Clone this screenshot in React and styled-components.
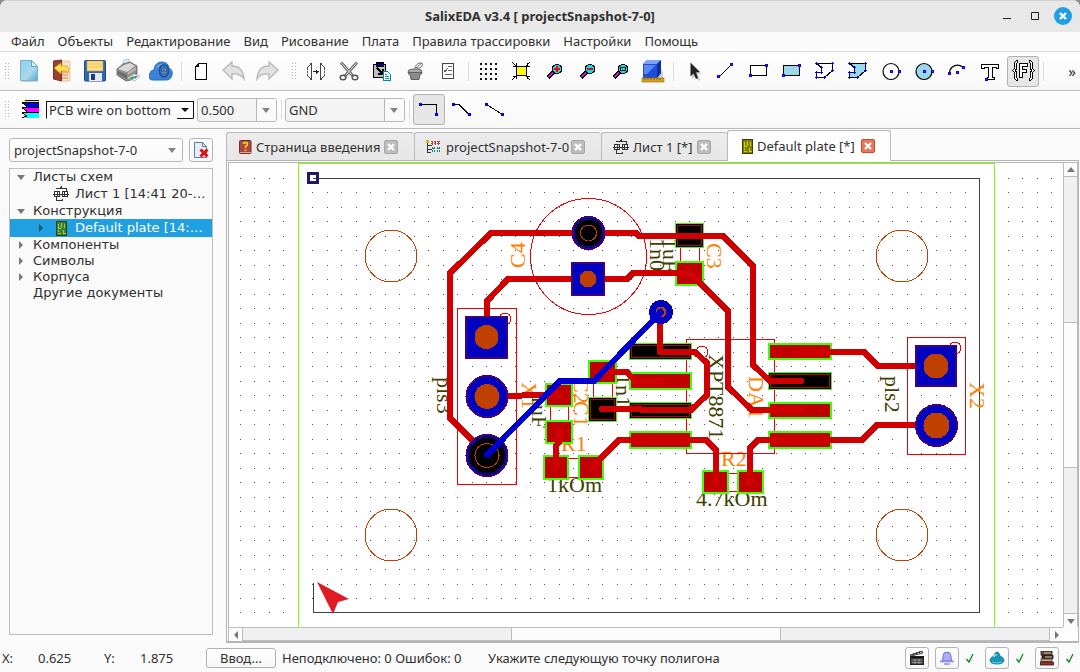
import React from 'react';
import styled, { createGlobalStyle, css } from 'styled-components';

const GlobalStyle = createGlobalStyle`
  *, *::before, *::after { box-sizing: border-box; }
  html, body, #root { height: 100%; }
  body {
    margin: 0;
    background: #8f8f8f;
    color: #303030;
    font-family: "Noto Sans", "Liberation Sans", sans-serif;
    font-size: 13px;
    line-height: 18px;
    overflow: hidden;
  }
  button, select, input { font: inherit; color: inherit; }
`;

/* ---------- window frame ---------- */

const Window = styled.div`
  height: 100%;
  display: flex;
  flex-direction: column;
  background: #fafafa;
  border-radius: 8px 8px 0 0;
  overflow: hidden;
`;

const TitleBar = styled.header`
  display: grid;
  grid-template-columns: 1fr auto 1fr;
  align-items: center;
  height: 32px;
  flex: none;
  background: #e8e8e8;
  box-shadow: inset 0 1px #d2d2d2;
`;

const Title = styled.h1`
  grid-column: 2;
  margin: 0;
  font-size: 13px;
  font-weight: 700;
  line-height: 18px;
`;

const WindowButtons = styled.div`
  display: flex;
  justify-content: flex-end;
  gap: 10px;
  padding-right: 8px;
`;

const WindowButton = styled.button`
  width: 18px;
  height: 18px;
  padding: 0;
  border: 0;
  border-radius: 50%;
  background: ${(p) => (p.$close ? '#20a0e0' : 'transparent')};
  svg { display: block; }
`;

const MenuBar = styled.nav`
  display: flex;
  align-items: flex-start;
  gap: 13px;
  height: 20px;
  flex: none;
  padding: 0 11px;
  background: #fbfbfb;
  border-bottom: 1px solid #dcdcdc;
`;

const MenuItem = styled.button`
  padding: 0;
  border: 0;
  background: none;
  line-height: 18px;
  white-space: nowrap;
`;

/* ---------- toolbars ---------- */

const ToolRow = styled.div`
  display: flex;
  align-items: center;
  gap: 4px;
  height: ${(p) => (p.$short ? 38 : 39)}px;
  flex: none;
  background: linear-gradient(#fefefe, #f8f8f8);
  border-bottom: 1px solid #b9b9b9;
`;

const ToolGroup = styled.div`
  display: flex;
  align-items: center;
  gap: 1px;
`;

const Handle = styled.span`
  width: 12px;
  height: 17px;
  flex: none;
  background: linear-gradient(90deg, #b4b4b4 1px, transparent 1px) 5px 0 / 3px 17px;
  background-clip: content-box;
  mask: repeating-linear-gradient(#000 0 1px, transparent 1px 3px);
  padding: 0 2px 0 5px;
`;

const Separator = styled.span`
  width: 6px;
  height: 19px;
  flex: none;
  background: linear-gradient(#dcdcdc, #dcdcdc) center / 1px 100% no-repeat;
`;

const ToolButton = styled.button`
  display: grid;
  place-items: center;
  width: 32px;
  height: 31px;
  flex: none;
  padding: 0;
  border: 1px solid transparent;
  border-radius: 3px;
  background: none;
  ${(p) => p.$pressed && css`
    background: #e6e6e6;
    border-color: #b2b2b2;
  `}
`;

const MoreButton = styled.button`
  margin-left: auto;
  padding: 0 4px;
  border: 0;
  background: none;
  font-size: 15px;
`;

const SelectBox = styled.div`
  position: relative;
  display: flex;
  width: ${(p) => p.$w};
  height: 24px;
  flex: none;
  border: 1px solid #b8b8b8;
  border-radius: 3px;
  background: ${(p) => (p.$white ? 'linear-gradient(#fff, #f8f8f8)' : '#f4f4f4')};
  ${(p) => p.$grow && css`flex: 1; min-width: 0;`}
  select {
    width: 100%;
    padding: 0 22px 0 ${(p) => (p.$white ? 4 : 3)}px;
    border: 0;
    background: none;
    appearance: none;
    outline: none;
  }
  &::after {
    content: "";
    position: absolute;
    right: 6px;
    top: 9px;
    border: 4px solid transparent;
    border-top: 5px solid #828282;
    border-bottom: 0;
  }
  ${(p) => !p.$white && css`
    &::before {
      content: "";
      position: absolute;
      right: 0;
      top: 0;
      bottom: 0;
      width: 20px;
      border-left: 1px solid #b8b8b8;
      background: #fafafa;
      border-radius: 0 2px 2px 0;
    }
  `}
`;

const LayerSelect = styled.div`
  position: relative;
  width: 148px;
  height: 18px;
  flex: none;
  margin-right: 2px;
  border: 1px solid #111;
  border-bottom-color: transparent;
  background: #fcfcfc;
  select {
    display: block;
    width: 100%;
    height: 16px;
    padding: 0 16px 0 2px;
    border: 0;
    line-height: 16px;
    background: none;
    appearance: none;
    outline: none;
  }
  &::before {
    content: "";
    position: absolute;
    right: 0;
    top: 0;
    width: 16px;
    height: 17px;
    border-bottom: 1px solid #111;
    background: #fcfcfc;
  }
  &::after {
    content: "";
    position: absolute;
    right: 4px;
    top: 6px;
    border: 4px solid transparent;
    border-top: 4px solid #111;
    border-bottom: 0;
  }
`;

/* ---------- body ---------- */

const Body = styled.main`
  display: flex;
  flex: 1;
  min-height: 0;
`;

const Sidebar = styled.aside`
  display: flex;
  flex-direction: column;
  gap: 6px;
  width: 226px;
  flex: none;
  padding: 9px 13px 9px 9px;
`;

const ProjectRow = styled.div`
  display: flex;
  gap: 6px;
`;

const SquareButton = styled.button`
  display: grid;
  place-items: center;
  width: 24px;
  height: ${(p) => p.$h || 24}px;
  flex: none;
  padding: 0;
  border: 1px solid #b4b4b4;
  border-radius: 3px;
  background: linear-gradient(#fff, #f6f6f6);
`;

const Tree = styled.ul`
  flex: 1;
  margin: 0;
  padding: 0;
  list-style: none;
  border: 1px solid #bdbdbd;
  background: #fafafa;
  font-family: "DejaVu Sans", sans-serif;
  font-size: 13px;
`;

const TreeRow = styled.li`
  display: flex;
  align-items: center;
  height: ${(p) => (p.$child ? 18 : 16)}px;
  padding-left: ${(p) => (p.$child ? 27 : 7)}px;
  line-height: 16px;
  white-space: nowrap;
  ${(p) => p.$selected && css`
    background: #20a0e0;
    color: #fff;
  `}
`;

const Twisty = styled.span`
  display: flex;
  width: 16px;
  flex: none;
`;

const TreeIcon = styled.span`
  display: flex;
  justify-content: center;
  width: 16px;
  margin-right: 6px;
  flex: none;
`;

const Workspace = styled.section`
  display: flex;
  flex-direction: column;
  flex: 1;
  min-width: 0;
  padding: 1px 0;
`;

const Tabs = styled.div`
  display: flex;
  align-items: flex-end;
  height: 30px;
  flex: none;
  position: relative;
  z-index: 1;
`;

const Tab = styled.div`
  display: flex;
  align-items: center;
  width: ${(p) => p.$w}px;
  height: ${(p) => (p.$active ? 31 : 28)}px;
  padding: 0 ${(p) => p.$pr}px 0 ${(p) => p.$pl}px;
  border: 1px solid #b9b9b9;
  border-right-width: ${(p) => (p.$active ? 1 : 0)}px;
  border-bottom: 0;
  border-radius: 3px 3px 0 0;
  background: ${(p) => (p.$active ? '#fdfdfd' : 'linear-gradient(#ececec, #e6e6e6)')};
  margin-bottom: ${(p) => (p.$active ? -1 : 0)}px;
`;

const TabName = styled.button`
  display: flex;
  align-items: center;
  gap: 4px;
  padding: 0;
  border: 0;
  background: none;
  white-space: nowrap;
  svg { flex: none; }
`;

const TabClose = styled.button`
  display: grid;
  place-items: center;
  width: 14px;
  height: 14px;
  margin-left: auto;
  flex: none;
  padding: 0;
  border: 1px solid ${(p) => (p.$active ? '#d04a2c' : '#a6a6a6')};
  border-radius: 2px;
  background: ${(p) => (p.$active ? '#e8785a' : '#bcbcbc')};
`;

const Frame = styled.div`
  display: grid;
  grid-template-columns: 1fr 15px;
  grid-template-rows: 1fr 14px;
  flex: 1;
  min-height: 0;
  margin-right: 1px;
  border: 1px solid #b5b5b5;
  border-bottom-width: 2px;
  padding: 1px 0 0 1px;
  background: #fdfdfd;
`;

const Board = styled.svg`
  display: block;
  width: 100%;
  height: 100%;
  min-height: 0;
  background: #fff;
  border-left: 1px solid #b5b5b5;
  border-top: 1px solid #b5b5b5;
`;

const ScrollBar = styled.div`
  display: flex;
  flex-direction: ${(p) => (p.$vertical ? 'column' : 'row')};
  border: 1px solid #bcbcbc;
  border-${(p) => (p.$vertical ? 'bottom' : 'right')}: 0;
  background: #f0f0f0;
`;

const ScrollArrow = styled.button`
  display: grid;
  place-items: center;
  width: 13px;
  height: 13px;
  flex: none;
  padding: 0;
  border: 0;
  background: #fcfcfc;
`;

const Groove = styled.span`
  flex: 1;
  border: 0 solid #bcbcbc;
  border-width: ${(p) => {
    if (p.$thumb) return 0;
    return p.$vertical ? '1px 0' : '0 1px';
  }};
  background: ${(p) => (p.$thumb ? '#fcfcfc' : '#f0f0f0')};
`;

/* ---------- status bar ---------- */

const StatusBar = styled.footer`
  display: flex;
  align-items: center;
  height: 28px;
  flex: none;
  padding-left: 2px;
  white-space: nowrap;
`;

const StatusText = styled.span`
  width: ${(p) => (p.$w ? `${p.$w}px` : 'auto')};
  flex: none;
`;

const InputButton = styled.button`
  width: 70px;
  height: 20px;
  margin-right: 6px;
  padding: 0;
  border: 1px solid #b0b0b0;
  border-radius: 3px;
  background: linear-gradient(#fff, #f6f6f6);
  line-height: 18px;
`;

const StatusIcons = styled.div`
  display: flex;
  align-items: center;
  margin-left: auto;
  ${SquareButton} + ${SquareButton} { margin-left: 6px; }
`;

const Check = styled.span`
  display: flex;
  justify-content: center;
  width: 14px;
  margin: 0 8px 0 4px;
  &:last-child { margin-right: 3px; }
`;

/* ---------- icons ---------- */

const Svg = ({ s = 24, w, h, crisp, children }) => (
  <svg
    width={w || s}
    height={h || s}
    viewBox={`0 0 ${w || s} ${h || s}`}
    fill="none"
    stroke="#000"
    shapeRendering={crisp ? 'crispEdges' : undefined}
    aria-hidden="true"
  >
    {children}
  </svg>
);

const Node = ({ x, y, hot }) => (
  <g stroke="none">
    <rect x={x - 1.5} y={y - 1.5} width="3" height="3" fill="#00f" />
    {hot && <rect x={x - 0.5} y={y - 0.5} width="1" height="1" fill="#f00" />}
  </g>
);

const Magnifier = ({ children }) => (
  <Svg crisp>
    <path d="M6 18.500 12 12.500" stroke="#000" strokeWidth="4" />
    <path d="M6.500 18 11 13.500" stroke="#f0f" strokeWidth="2" />
    <ellipse cx="15" cy="10" rx="5" ry="4.500" fill="#00e5ee" />
    {children}
  </Svg>
);

const icons = {
  create: (
    <Svg>
      <defs>
        <linearGradient id="doc" x1="0" y1="0" x2="1" y2="1">
          <stop offset="0" stopColor="#8ed0ec" />
          <stop offset=".6" stopColor="#a9d9ea" />
          <stop offset="1" stopColor="#58a9cc" />
        </linearGradient>
      </defs>
      <path d="M4 21h18l-2 2H5z" fill="#ccc" stroke="none" />
      <path d="M3.500 1.500h11l6 6v14h-17z" fill="url(#doc)" stroke="#6db7d4" />
      <path d="M14.500 1.500v6h6z" fill="#d9f1f8" stroke="#5aa9c8" />
    </Svg>
  ),
  close: (
    <Svg>
      <path d="M10 2h10v20H10z" fill="#f7dfbe" stroke="#e3c8a4" />
      <path d="M13 10h5M12 13h6M12 16h6M12 19h6" stroke="#d08a5b" />
      <path d="m3.500 2 8-1v21l-8-2z" fill="#9c3f35" stroke="#7c2f28" />
      <path d="m4 9 7-5v3h5q4 2 2 7-1-3-7-2v3z" fill="#ffe050" stroke="#d49a00" strokeWidth=".7" />
    </Svg>
  ),
  save: (
    <Svg>
      <rect x="1.500" y="1.500" width="21" height="20.500" rx="1" fill="#2d68b2" stroke="#1d4a87" />
      <rect x="4" y="2" width="16" height="10" fill="#ffe08a" stroke="#c89b3c" strokeWidth=".6" />
      <path d="M5 5h14M5 8h14" stroke="#f1bd55" />
      <rect x="6" y="14" width="13" height="8" fill="#e4e9ee" stroke="none" />
      <rect x="8" y="15" width="4" height="6" fill="#1c3f70" stroke="none" />
    </Svg>
  ),
  print: (
    <Svg>
      <path d="m6 7 2-6 5-1 1 7z" fill="#dcecf9" stroke="#9cb4c8" strokeWidth=".7" />
      <path d="m1 10 6-5 7-2 7 4v8l-6 6-5 1-9-6z" fill="#8d8d8d" stroke="#606060" strokeWidth=".8" />
      <path d="m2 10 6-4 6-2 5 3-8 6z" fill="#d8d8d8" stroke="none" />
      <path d="m2 12 9 4v4l-9-5z" fill="#6a6a6a" stroke="none" />
      <path d="m12 13 8-5v3l-8 5z" fill="#b4b4b4" stroke="none" />
      <path d="m11 19 7-4 6 2-5 5z" fill="#f6f6f6" stroke="#999" strokeWidth=".6" />
      <path d="m13 19 4-2 2 2-3 2z" fill="#3fae49" stroke="none" />
      <path d="m18 17 4 0-3 3z" fill="#3c78d8" stroke="none" />
    </Svg>
  ),
  cloud: (
    <Svg>
      <path d="M4 21a4 4 0 0 1-3-7q1-3 4-3 1-8 8-8 6 0 7 6 4 2 3 7-1 5-6 5z" fill="#3b82d8" stroke="#2c68b6" />
      <path d="M6 11q2-7 8-6-5 1-8 6z" fill="#8cbcf0" stroke="none" />
      <ellipse cx="15" cy="12" rx="4.500" ry="6" fill="none" stroke="#244f8e" strokeWidth="1.500" />
      <ellipse cx="15" cy="12" rx="2.500" ry="3.500" fill="#9dbfe8" stroke="#294c7d" />
      <path d="M15 9v6M13 12h4" stroke="#294c7d" />
    </Svg>
  ),
  page: (
    <Svg crisp>
      <path d="M9.500 4.500h8v16h-11v-13z" fill="#fff" />
      <path d="M9.500 4.500v3h-3z" fill="#008080" />
    </Svg>
  ),
  undo: (
    <Svg>
      <path d="m1 11 9-8v4q11 0 12 13-4-6-12-5v5z" fill="#e2e2e2" stroke="#b8b8b8" strokeWidth="1.300" />
    </Svg>
  ),
  redo: (
    <Svg>
      <path d="m23 11-9-8v4q-11 0-12 13 4-6 12-5v5z" fill="#e2e2e2" stroke="#b8b8b8" strokeWidth="1.300" />
    </Svg>
  ),
  mirror: (
    <Svg crisp>
      <path d="M7.500 4v17M16.500 4v17" stroke="#444" />
      <path d="M7.500 4 3.500 9v7l4 5M16.500 4l4 5v7l-4 5" stroke="#444" strokeDasharray="2 1" />
      <path d="M9 12.500h6M12.500 10.500v4M13.500 11.500v2" stroke="#222" />
    </Svg>
  ),
  cut: (
    <Svg>
      <path d="M4 3.500 16 17M20 3.500 8 17" stroke="#5c5c5c" strokeWidth="2.800" />
      <path d="M4 3.500 16 17M20 3.500 8 17" stroke="#f2f2f2" strokeWidth="1" />
      <ellipse cx="6" cy="18.500" rx="2.800" ry="2.300" stroke="#555" strokeWidth="1.500" />
      <ellipse cx="18" cy="18.500" rx="2.800" ry="2.300" stroke="#555" strokeWidth="1.500" />
    </Svg>
  ),
  paste: (
    <Svg crisp>
      <rect x="3.500" y="5.500" width="12" height="13" fill="#c0c0c0" strokeWidth="1" />
      <path d="M6 3h7v4H6z" fill="#000080" />
      <path d="m7 9 5 5M12.500 10v4.500H8" strokeWidth="2" />
      <path d="M13.500 12.500h4l3 3v6h-7z" fill="#fff" stroke="#008b9b" />
      <path d="M15 15.500h2M15 17.500h4M15 19.500h4" stroke="#00a0b0" />
    </Svg>
  ),
  bucket: (
    <Svg>
      <ellipse cx="12" cy="12" rx="7" ry="2" fill="#aaa" stroke="#666" />
      <path d="M5 13.500h14l-1 2h-1l-1 5H8l-1-5H6z" fill="#8c8c8c" stroke="#606060" />
      <path d="M12 10q0-5 5-6 4 0 2 3-2 3-6 2l6-5" stroke="#6d6d6d" />
    </Svg>
  ),
  checklist: (
    <Svg crisp>
      <rect x="6.500" y="4.500" width="11" height="15" fill="#fff" stroke="#444" />
      <path d="M12 7.500h4M12 11.500h4M9 15.500h7" stroke="#666" />
      <path d="m8 11 1 2 3-4" stroke="#666" />
    </Svg>
  ),
  grid: (
    <Svg crisp>
      {[4, 9, 14, 19].map((y) => [4, 9, 14, 19].map((x) => (
        <rect key={`${x}-${y}`} x={x} y={y} width="2" height="2" fill="#111" stroke="none" />
      )))}
    </Svg>
  ),
  fit: (
    <Svg crisp>
      <rect x="7.500" y="7.500" width="10" height="9" fill="#ff0" />
      <path d="m3 3 4 4M4 7h3V4M21 3l-4 4M21 7h-3V4M3 21l4-4M4 17h3v3M21 21l-4-4M21 17h-3v3" />
    </Svg>
  ),
  zoomIn: <Magnifier><path d="M12 10h6M15 7v6" stroke="#f00" strokeWidth="2" /></Magnifier>,
  zoomOut: <Magnifier><path d="M12 10h6" stroke="#f00" strokeWidth="2" /></Magnifier>,
  zoomFit: <Magnifier><rect x="12.500" y="8.500" width="5" height="3" stroke="#000" /></Magnifier>,
  cube: (
    <Svg>
      <path d="M17 20V6l5 7v7z" fill="#d0d0d0" stroke="none" />
      <path d="m2 5 4-4h14v13l-4 5H2z" fill="#1e4ed8" stroke="none" />
      <path d="m2 5 4-4h14l-4 4z" fill="#7da4ff" stroke="none" />
      <path d="m16 5 4-4v13l-4 5z" fill="#0c2fa0" stroke="none" />
      <path d="M3 6h12L6 15H3z" fill="#5b86f5" stroke="none" />
      <rect x="1" y="19" width="22" height="4" fill="#d5a11b" stroke="#94690a" strokeWidth=".6" />
      <path d="M4 19v2M7 19v2M10 19v2M13 19v2M16 19v2M19 19v2" stroke="#7a5500" strokeWidth=".7" />
    </Svg>
  ),
  pointer: (
    <Svg>
      <path d="m11 7 0 13 3.500-3 3 5 2-1.500-3-5 4-1z" fill="#ccc" stroke="none" />
      <path d="m9.500 3.500 0 14 3-3 2.500 5.500 2-1-2-5.500 4-.5z" fill="#222" stroke="none" />
    </Svg>
  ),
  line: (
    <Svg crisp>
      <path d="M5 18 17 6" />
      <Node x={4.500} y={17.500} hot /><Node x={17.500} y={5.500} hot />
    </Svg>
  ),
  rect: (
    <Svg crisp>
      <rect x="3.500" y="6.500" width="16" height="10" fill="#fff" />
      <Node x={3.500} y={16.500} hot /><Node x={19.500} y={6.500} hot />
    </Svg>
  ),
  fillRect: (
    <Svg crisp>
      <rect x="3.500" y="6.500" width="16" height="10" fill="#9bd8ea" />
      <Node x={3.500} y={16.500} hot /><Node x={19.500} y={6.500} hot />
    </Svg>
  ),
};

const polygonIcon = (fill) => (
  <Svg crisp>
    <path d="M3.500 4.500h16v7l-8 7h-8v-5h5v-5z" fill={fill} />
    {[[3.5, 4.5], [19.5, 4.5], [19.5, 11.5], [11.5, 18.5], [3.5, 18.5], [3.5, 13.5], [8.5, 13.5], [8.5, 8.5]].map(([x, y]) => (
      <path key={`${x}${y}`} d={`M${x - 1.5} ${y}h3M${x} ${y - 1.5}v3`} stroke="#00f" />
    ))}
  </Svg>
);

const circleIcon = (fill) => (
  <Svg>
    <circle cx="12" cy="12.500" r="8" fill={fill} strokeWidth="1.200" />
    <g shapeRendering="crispEdges"><Node x={12.500} y={12.500} hot /><Node x={20.500} y={12.500} hot /></g>
  </Svg>
);

Object.assign(icons, {
  polygon: polygonIcon('#fff'),
  fillPolygon: polygonIcon('#9bd8ea'),
  circle: circleIcon('#fff'),
  fillCircle: circleIcon('#9bd8ea'),
  arc: (
    <Svg>
      <path d="M4.500 13.500a8 8 0 0 1 13-5.500" strokeWidth="1.200" />
      <g shapeRendering="crispEdges">
        <Node x={4.500} y={14.500} hot /><Node x={12.500} y={13.500} hot /><Node x={18.500} y={8.500} hot />
      </g>
    </Svg>
  ),
  text: (
    <Svg crisp>
      <path d="M3.500 5.500h17v4h-2v-1h-4v10h2v2h-7v-2h1v-10h-4v1h-3z" fill="#fff" />
      <Node x={8.500} y={20.500} hot />
    </Svg>
  ),
  formula: (
    <Svg crisp>
      <path d="M6.500 1.500h-1l-2 2v6l-2 2 2 2v6l2 2h1v-2l-1-1v-5l-1-2 1-2v-5l1-1z" fill="#fff" />
      <path d="M18.500 1.500h1l2 2v6l2 2-2 2v6l-2 2h-1v-2l1-1v-5l1-2-1-2v-5l-1-1z" fill="#fff" />
      <path d="M8.500 4.500h8v3h-5v3h4v3h-4v5h-3z" fill="#fff" />
    </Svg>
  ),
  corner: (
    <Svg crisp>
      <path d="M3 6.500h16v10" />
      <Node x={3.500} y={6.500} /><Node x={19.500} y={16.500} />
    </Svg>
  ),
  bevel: (
    <Svg crisp>
      <path d="M3 6.500h6l10 10" />
      <Node x={3.500} y={6.500} /><Node x={19.500} y={16.500} />
    </Svg>
  ),
  free: (
    <Svg crisp>
      <path d="m3.500 6.500 16 10" />
      <Node x={3.500} y={6.500} /><Node x={19.500} y={16.500} />
    </Svg>
  ),
  layers: (
    <Svg crisp>
      <path d="M7 2h15v2H5z" fill="#ff0" stroke="none" />
      <path d="M5 5h17v4H10z" fill="#00f" stroke="none" />
      <path d="M5 10h17v4H10z" fill="#f0f" stroke="none" />
      <path d="M5 15h17v5H5l3-2z" fill="#0ff" stroke="none" />
      <path d="M5 4.500h17M5 9.500h17M5 14.500h17M8 2.500h14M5 4.500l5 4M5 9.500l5 4M5 14.500l5 4M5 19.500l4-1" />
    </Svg>
  ),
});

const SheetIcon = () => (
  <Svg s={16} crisp>
    <path d="M2.500 2.500h5v-2M8.500 0v2h5v3M2.500 14.500h7v-2M1.500 5.500h5v5h-5zM9.500 5.500h5v5h-5zM0 8.500h16M4.500 5v6M11.500 5v6M3.500 11v3" stroke="#333" />
  </Svg>
);

const PlateIcon = ({ base, trace }) => (
  <Svg w={11} h={15} crisp>
    <rect x="0.500" y="0.500" width="10" height="14" fill={base} stroke="#304010" />
    <path d="M2.500 3v4h2M5.500 2v5M8.500 3v4M2 12.500h3M7.500 9v3h2M2.500 9v2" stroke={trace} />
  </Svg>
);

const BookIcon = () => (
  <Svg w={13} h={16}>
    <rect x="0.500" y="1.500" width="11.500" height="13" rx="1" fill="#a8483e" stroke="#76302a" />
    <path d="M1 13.500h11" stroke="#d8a898" />
    <path d="M4.500 5q0-1.500 2-1.500T8.500 5q0 1.500-2 2.500v1.500M6.500 10.500v1.500" stroke="#ffdf20" strokeWidth="1.600" />
  </Svg>
);

const ProjectIcon = () => (
  <Svg s={16} crisp>
    <path d="M1.500 2v11.500h3M2 6.500h4M2 10.500h4" stroke="#333" />
    <path d="M5 2.500h2M8 2.500h2M11 2.500h3M5 4.500h2M8 4.500h2M11 4.500h3M6.500 2v4M9.500 2v4M12.500 2v4" stroke="#b04040" />
    <path d="M6.500 8v6M8.500 8v6M11.500 8v6M13.500 8v6M6 9.500h3M11 9.500h3" stroke="#188080" strokeDasharray="2 1" />
    <rect x="0" y="1" width="3" height="3" fill="#c0c020" stroke="none" />
  </Svg>
);

const Cross = ({ s = 8 }) => (
  <svg width={s} height={s} viewBox="0 0 8 8" aria-hidden="true">
    <path d="m1 1 6 6M7 1 1 7" stroke="#fff" strokeWidth="2.400" fill="none" />
  </svg>
);

const Triangle = ({ dir, color = '#777' }) => {
  const shapes = { up: 'M0 6h8L4 1z', down: 'M0 2h8L4 7z', left: 'M6 0v8L2 4z', right: 'M2 0v8l4-4z' };
  return (
    <svg width="8" height="8" viewBox="0 0 8 8" aria-hidden="true">
      <path d={shapes[dir]} fill={color} />
    </svg>
  );
};

const TickMark = () => (
  <Svg s={12}><path d="m2.500 7 2.500 3L9 2" stroke="#078a18" strokeWidth="1.300" /></Svg>
);

const ClapperIcon = () => (
  <Svg s={16}>
    <rect x="1.500" y="6.500" width="13" height="8" fill="#444" stroke="#222" />
    <path d="m1 5 12-4 1 2L2 6z" fill="#ddd" stroke="#222" strokeWidth=".8" />
    <path d="m4 4 1 1m2-2 1 1m2-2 1 1M2 7.500h12" stroke="#111" strokeWidth="1.600" />
    <path d="M3 10h10M3 12.500h10M6 9v5M10 9v5" stroke="#aaa" strokeWidth=".7" />
  </Svg>
);

const BellIcon = () => (
  <Svg s={16}>
    <path d="M3 11q1-2 1-5 0-4 4-4t4 4q0 3 1 5z" fill="#9a9af4" stroke="#7c7ce6" />
    <path d="M1 11.500h14M5 14h6" stroke="#8888ee" strokeWidth="1.600" />
    <path d="M6 4v6M8 3v7M10 4v6" stroke="#c8c8ff" strokeWidth=".8" />
  </Svg>
);

const BlobIcon = () => (
  <Svg s={16}>
    <path d="M1 10q1-3 4-4 1-4 3-4t3 4q3 1 4 4 0 4-7 4t-7-4z" fill="#1496b4" stroke="#0c6e8c" strokeWidth=".8" />
    <path d="M5 7q1-3 3-2" stroke="#a8ecf8" strokeWidth="1.300" />
    <path d="M3 12q5 2 10 0" stroke="#5fd4ea" />
  </Svg>
);

const BooksIcon = () => (
  <Svg s={16}>
    <rect x="2" y="1.500" width="11" height="3.500" fill="#6b4a2c" stroke="#2b1d10" strokeWidth=".8" />
    <rect x="3" y="5.500" width="11" height="3" fill="#2e2e2e" stroke="#111" strokeWidth=".8" />
    <rect x="2" y="9" width="11" height="2.500" fill="#c8ab80" stroke="#533" strokeWidth=".8" />
    <rect x="1.500" y="12" width="13" height="3" fill="#8f332c" stroke="#3d1512" strokeWidth=".8" />
    <path d="M5 3h7M6 7h7" stroke="#d8c69c" />
  </Svg>
);

const DeletePageIcon = () => (
  <Svg s={16}>
    <path d="M1.500.5h8l4 4v11h-12z" fill="#e4effa" stroke="#5d7898" />
    <path d="M9.500.5v4h4" stroke="#5d7898" />
    <path d="m7.500 7.500 7 7M14.500 7.500l-7 7" stroke="#e01010" strokeWidth="3" />
  </Svg>
);

/* ---------- circuit board drawing ---------- */

const PITCH = 14.49;
const GREEN = '#40ff00';

const Pad = ({ x, y, w, h, active }) => (
  <g>
    <rect x={x} y={y} width={w} height={h} fill={GREEN} />
    {active ? (
      <>
        <rect x={x + 1} y={y + 1} width={w - 2} height={h - 2} fill="#000" />
        <rect x={x + 2.5} y={y + 2.5} width={w - 5} height={h - 5} fill="none" stroke="#c00000" />
      </>
    ) : (
      <rect x={x + 2} y={y + 2} width={w - 4} height={h - 4} fill="#c00000" />
    )}
  </g>
);

const SquareHole = ({ cx, cy, half, r }) => (
  <g>
    <rect x={cx - half + 1} y={cy - half + 1} width={half * 2 - 2} height={half * 2 - 2} fill="#0000c0" stroke="#400080" strokeWidth="2" />
    <circle cx={cx} cy={cy} r={r} fill="#c04000" />
  </g>
);

const RoundHole = ({ cx, cy, half, r, active }) => (
  <g>
    <circle cx={cx} cy={cy} r={half - 1} fill={active ? '#000' : '#0000c0'} stroke="#400080" strokeWidth="2" />
    {active && <circle cx={cx} cy={cy} r={half - 3} fill="none" stroke="#0000e0" />}
    <circle cx={cx} cy={cy} r={r} fill={active ? 'none' : '#c04000'} stroke="#c04000" />
  </g>
);

const smdPads = [
  [675, 223, 29, 25, true], [675, 261, 29, 25],
  [588, 360, 29, 24], [588, 397, 29, 25, true],
  [545, 383, 28, 24], [545, 420, 28, 24],
  [543, 455, 26, 25], [578, 455, 26, 25],
  [702, 470, 27, 24], [737, 470, 27, 24],
  [629, 343, 63, 17, true], [629, 372, 63, 18], [629, 402, 63, 17, true], [629, 431, 63, 18],
  [768, 343, 64, 17], [768, 372, 64, 18, true], [768, 402, 64, 17], [768, 431, 64, 18],
];

const redTraces = [
  '588,233 491,233 450,273 450,418 487,455',
  '588,279 508,279 487,301 487,337',
  '588,233 636,233 639,236 723,236 753,266 753,365 770,381 801,381',
  '588,279 627,279 633,273 690,273 728,311 728,387 752,410 801,410',
  '487,396 520,396 524,395 560,395',
  '559,431 559,442 556,446 556,467',
  '592,467 619,440 706,440 716,450 716,483',
  '750,483 750,448 758,440 862,440 877,425 936,425',
  '799,352 864,352 878,366 936,366',
  '601,372 627,372 635,381 662,381',
  '602,409 640,409 642,410 691,410 707,395 707,363 695,352 660,352 660,313',
];

/* x, y is the baseline start; turn is the rotation in degrees */
const labels = [
  { t: 'C4', x: 525, y: 268, turn: -90, ref: true },
  { t: 'C3', x: 707, y: 243, turn: 90, ref: true },
  { t: 'X1', x: 522, y: 382, turn: 90, ref: true },
  { t: 'C2', x: 574, y: 378, turn: 90, ref: true },
  { t: 'C1', x: 574, y: 401, turn: 90, ref: true },
  { t: 'DA1', x: 749, y: 376, turn: 90, ref: true },
  { t: 'X2', x: 970, y: 382, turn: 90, ref: true },
  { t: 'R1', x: 561, y: 451, turn: 0, ref: true },
  { t: 'R2', x: 721, y: 466, turn: 0, ref: true },
  { t: '1n0', x: 650, y: 238, turn: 90 },
  { t: '1uF', x: 663, y: 238, turn: 90 },
  { t: '1uF', x: 532, y: 394, turn: 90 },
  { t: '1n1', x: 616, y: 374, turn: 90 },
  { t: 'pls3', x: 437, y: 377, turn: 90 },
  { t: 'pls2', x: 885, y: 376, turn: 90 },
  { t: 'XPT8871', x: 709, y: 354, turn: 90 },
  { t: '1kOm', x: 547, y: 492, turn: 0 },
  { t: '4.7kOm', x: 696, y: 506, turn: 0 },
];

const holes = [[391, 256], [902, 256], [391, 535], [902, 535]];

const BoardDrawing = () => (
  <Board role="img" aria-label="Default plate">
    <g transform="translate(-229 -163)">
      <g shapeRendering="crispEdges">
        {Array.from({ length: 30 }, (_, r) => Array.from({ length: 57 }, (_, c) => {
          const inGap = c === 4 || c === 51 || c === 52;
          return inGap ? null : (
            <rect key={`${r}-${c}`} x={Math.round(240 + c * PITCH)} y={Math.round(178 + r * PITCH)} width="1" height="1" fill="#555" />
          );
        }))}
        {[0, 1, 2, 3, 53, 54, 55, 56].map((c) => (
          <rect key={c} x={Math.round(240 + c * PITCH)} y="612" width="1" height="1" fill="#555" />
        ))}
        <path d="M298.500 628V163.500H994.500V628" fill="none" stroke="#80ff00" />
        <path d="M313.500 583V612.500H979.500V178.500H313" fill="none" stroke="#404040" />
        <rect x="308.500" y="173.500" width="9" height="9" fill="#fff" stroke="#201868" strokeWidth="3" />
        <path d="M313 178.500h4" stroke="#404040" />
      </g>

      <g fontFamily="'Liberation Serif', serif" fontSize="22">
        {labels.map((l) => (
          <text key={l.t + l.x} transform={`translate(${l.x} ${l.y}) rotate(${l.turn})`} fill={l.ref ? '#ff8000' : '#404000'}>
            {l.t}
          </text>
        ))}
      </g>

      <g fill="none" stroke="#f00000" shapeRendering="crispEdges">
        <circle cx="588.500" cy="256.500" r="58" />
        <rect x="457.500" y="308.500" width="59" height="176" />
        <rect x="907.500" y="337.500" width="58" height="117" />
        <rect x="686.500" y="339.500" width="88" height="114" />
        <circle cx="505" cy="319" r="6" />
        <circle cx="955" cy="348" r="6" />
        <circle cx="702" cy="352" r="6" />
        <path d="M680.500 247v15M699.500 247v15M550.500 406v15M568.500 406v15M593.500 383v15M612.500 383v15" />
        <path d="M568 458.500h11M568 477.500h11M728 473.500h10M728 491.500h10" />
      </g>
      <g fill="none" stroke="#c04000" shapeRendering="crispEdges">
        {holes.map(([x, y]) => <circle key={`${x}-${y}`} cx={x} cy={y} r="26" />)}
      </g>

      <g shapeRendering="crispEdges">
        {smdPads.map(([x, y, w, h, active]) => <Pad key={`${x}-${y}`} x={x} y={y} w={w} h={h} active={active} />)}
      </g>
      <g fill="none" stroke="#d00000" strokeWidth="6" strokeLinecap="round" strokeLinejoin="round" shapeRendering="crispEdges">
        {redTraces.map((p) => <polyline key={p} points={p} />)}
      </g>
      <g shapeRendering="crispEdges">
        <SquareHole cx={588} cy={279} half={17} r={8.5} />
        <RoundHole cx={588.5} cy={233} half={17} r={8} active />
        <SquareHole cx={486.5} cy={337} half={21.5} r={12} />
        <RoundHole cx={487} cy={396.5} half={21.5} r={12} />
        <RoundHole cx={487} cy={455.5} half={21.5} r={12} active />
        <SquareHole cx={936} cy={366} half={21} r={12.5} />
        <RoundHole cx={936.5} cy={425.5} half={21.5} r={12.5} />
        <circle cx="661" cy="312" r="12" fill="#0000c0" />
        <circle cx="661" cy="312" r="4.500" fill="none" stroke="#c04000" strokeWidth="1.500" />
        <polyline points="660,313 594,381 560,381 487,455" fill="none" stroke="#0000d0" strokeWidth="6" strokeLinecap="round" strokeLinejoin="round" />
        <path d="M657 309a4.500 4.500 0 1 1 4.500 7.500" fill="none" stroke="#c04000" strokeWidth="1.500" />
      </g>
      <path d="m317 582 32 17-11 3-5 12z" fill="#e01b24" />
    </g>
  </Board>
);

/* ---------- content ---------- */

const menus = ['Файл', 'Объекты', 'Редактирование', 'Вид', 'Рисование', 'Плата', 'Правила трассировки', 'Настройки', 'Помощь'];

const fileTools = ['create', 'close', 'save', 'print', 'cloud', '|', 'page', 'undo', 'redo'];
const drawTools = [
  'mirror', 'cut', 'paste', 'bucket', 'checklist', '|',
  'grid', 'fit', 'zoomIn', 'zoomOut', 'zoomFit', 'cube', '|',
  'pointer', 'line', 'rect', 'fillRect', 'polygon', 'fillPolygon', 'circle', 'fillCircle', 'arc', 'text', 'formula', '|',
];

const Tools = ({ names, pressed }) => names.map((name, i) => (
  name === '|'
    ? <Separator key={i} />
    : <ToolButton key={name} $pressed={name === pressed} aria-pressed={name === pressed} aria-label={name}>{icons[name]}</ToolButton>
));

const treeRows = [
  { text: 'Листы схем', open: true },
  { text: 'Лист 1 [14:41 20-…', child: true, icon: <SheetIcon /> },
  { text: 'Конструкция', open: true },
  { text: 'Default plate [14:…', child: true, icon: <PlateIcon base="#3f7f30" trace="#9acb50" />, selected: true, closed: true },
  { text: 'Компоненты', closed: true },
  { text: 'Символы', closed: true },
  { text: 'Корпуса', closed: true },
  { text: 'Другие документы' },
];

const tabs = [
  { name: 'Страница введения', icon: <BookIcon />, w: 188, pl: 12, pr: 16 },
  { name: 'projectSnapshot-7-0', icon: <ProjectIcon />, w: 187, pl: 11, pr: 16 },
  { name: 'Лист 1 [*]', icon: <SheetIcon />, w: 126, pl: 11, pr: 16 },
  { name: 'Default plate [*]', icon: <PlateIcon base="#808000" trace="#d8d800" />, w: 164, pl: 14, pr: 15, active: true },
];

export default function App() {
  return (
    <>
      <GlobalStyle />
      <Window>
        <TitleBar>
          <Title>SalixEDA v3.4 [ projectSnapshot-7-0]</Title>
          <WindowButtons>
            <WindowButton aria-label="Minimize">
              <svg width="18" height="18"><path d="M5 11.500h8" stroke="#222" strokeWidth="1" /></svg>
            </WindowButton>
            <WindowButton aria-label="Maximize">
              <svg width="18" height="18"><path d="M5.500 5.500h7v7h-7z" fill="none" stroke="#222" /></svg>
            </WindowButton>
            <WindowButton $close aria-label="Close">
              <svg width="18" height="18"><path d="m6 6 6 6M12 6l-6 6" stroke="#fff" strokeWidth="2.400" /></svg>
            </WindowButton>
          </WindowButtons>
        </TitleBar>

        <MenuBar>
          {menus.map((m) => <MenuItem key={m}>{m}</MenuItem>)}
        </MenuBar>

        <ToolRow>
          <ToolGroup>
            <Handle />
            <Tools names={fileTools} />
          </ToolGroup>
          <ToolGroup>
            <Handle />
            <Tools names={drawTools} pressed="formula" />
          </ToolGroup>
          <MoreButton aria-label="More">»</MoreButton>
        </ToolRow>

        <ToolRow $short>
          <ToolGroup>
            <Handle />
            <ToolButton aria-label="Layers">{icons.layers}</ToolButton>
            <LayerSelect>
              <select aria-label="Layer"><option>PCB wire on bottom</option></select>
            </LayerSelect>
            <SelectBox $w="80px">
              <select aria-label="Width"><option>0.500</option></select>
            </SelectBox>
            <Separator />
            <SelectBox $w="120px">
              <select aria-label="Net"><option>GND</option></select>
            </SelectBox>
            <Separator />
            <Tools names={['corner', 'bevel', 'free']} pressed="corner" />
          </ToolGroup>
        </ToolRow>

        <Body>
          <Sidebar>
            <ProjectRow>
              <SelectBox $w="auto" $white $grow>
                <select aria-label="Project"><option>projectSnapshot-7-0</option></select>
              </SelectBox>
              <SquareButton aria-label="Close project"><DeletePageIcon /></SquareButton>
            </ProjectRow>
            <Tree>
              {treeRows.map((r) => (
                <TreeRow key={r.text} $child={r.child} $selected={r.selected}>
                  <Twisty>
                    {r.open && <Triangle dir="down" />}
                    {r.closed && <Triangle dir="right" color={r.selected ? '#1a5272' : '#777'} />}
                  </Twisty>
                  {r.icon && <TreeIcon>{r.icon}</TreeIcon>}
                  {r.text}
                </TreeRow>
              ))}
            </Tree>
          </Sidebar>

          <Workspace>
            <Tabs>
              {tabs.map((t) => (
                <Tab key={t.name} $w={t.w} $pl={t.pl} $pr={t.pr} $active={t.active}>
                  <TabName>{t.icon}{t.name}</TabName>
                  <TabClose $active={t.active} aria-label={`Close ${t.name}`}><Cross /></TabClose>
                </Tab>
              ))}
            </Tabs>
            <Frame>
              <BoardDrawing />
              <ScrollBar $vertical>
                <ScrollArrow aria-label="Up"><Triangle dir="up" /></ScrollArrow>
                <Groove $vertical />
                <Groove $vertical $thumb />
                <Groove $vertical />
                <ScrollArrow aria-label="Down"><Triangle dir="down" /></ScrollArrow>
              </ScrollBar>
              <ScrollBar>
                <ScrollArrow aria-label="Left"><Triangle dir="left" /></ScrollArrow>
                <Groove />
                <Groove $thumb />
                <Groove />
                <ScrollArrow aria-label="Right"><Triangle dir="right" /></ScrollArrow>
              </ScrollBar>
            </Frame>
          </Workspace>
        </Body>

        <StatusBar>
          <StatusText $w={36}>X:</StatusText>
          <StatusText $w={66}>0.625</StatusText>
          <StatusText $w={36}>Y:</StatusText>
          <StatusText $w={66}>1.875</StatusText>
          <InputButton>Ввод...</InputButton>
          <StatusText $w={206}>Неподключено: 0 Ошибок: 0</StatusText>
          <StatusText>Укажите следующую точку полигона</StatusText>
          <StatusIcons>
            <SquareButton $h={22} aria-label="Video"><ClapperIcon /></SquareButton>
            <SquareButton $h={22} aria-label="Notifications"><BellIcon /></SquareButton>
            <Check><TickMark /></Check>
            <SquareButton $h={22} aria-label="Server"><BlobIcon /></SquareButton>
            <Check><TickMark /></Check>
            <SquareButton $h={22} aria-label="Library"><BooksIcon /></SquareButton>
            <Check><TickMark /></Check>
          </StatusIcons>
        </StatusBar>
      </Window>
    </>
  );
}
